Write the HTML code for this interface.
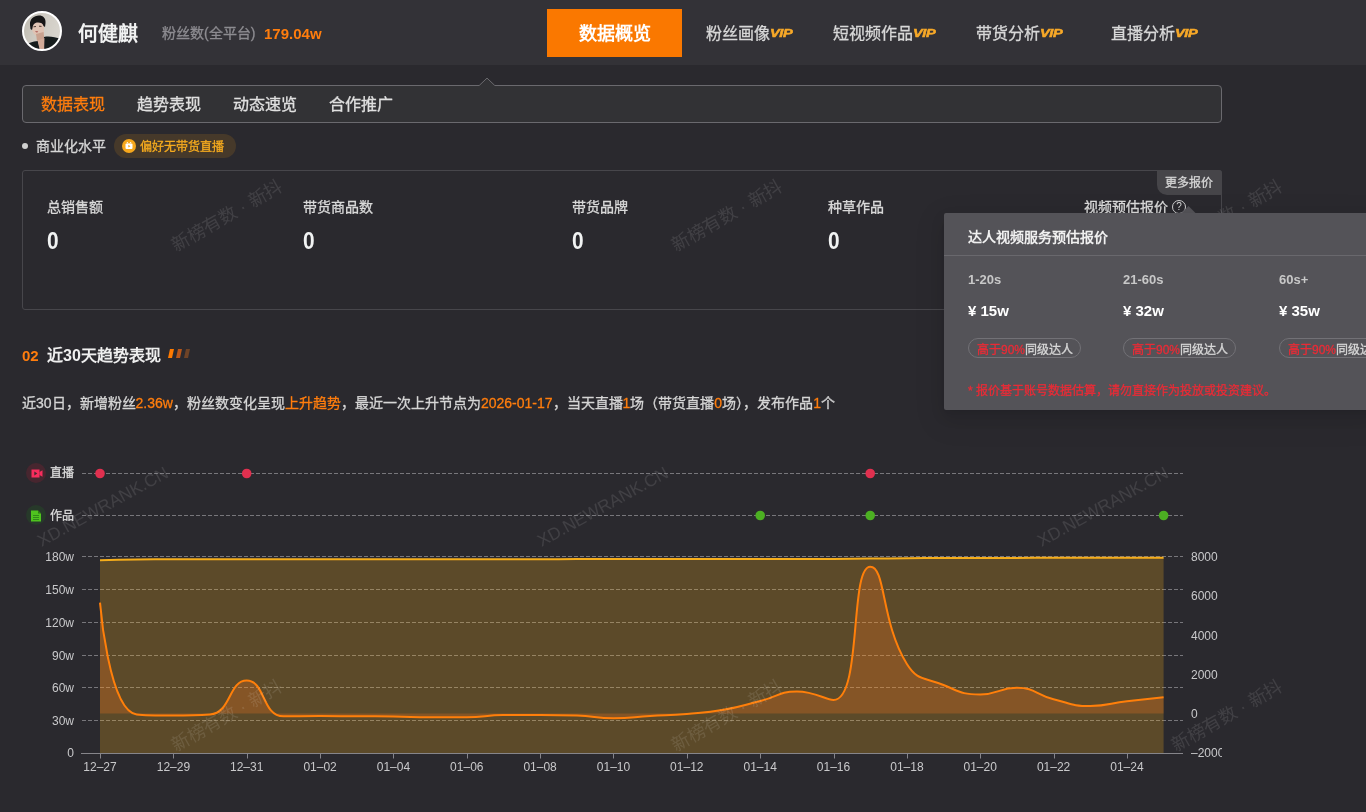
<!DOCTYPE html>
<html lang="zh-CN">
<head>
<meta charset="utf-8">
<style>
*{margin:0;padding:0;box-sizing:border-box}
body{will-change:transform}html,body{width:1366px;height:812px;overflow:hidden;background:#2a292e;font-family:"Liberation Sans",sans-serif;color:#d8d8d8}
.abs{position:absolute;white-space:nowrap}
.t{position:absolute;white-space:nowrap;line-height:1;-webkit-text-stroke:0.3px currentColor}.t[style*="bold"]{-webkit-text-stroke:0}
.ax{font-family:"Liberation Sans",sans-serif;font-size:12px;fill:#c9c9cb}
.or{color:#ff7d0d}
.red{color:#ea2b36}
.vip{position:absolute;font-size:11px;font-weight:bold;font-style:italic;color:#f8a928;letter-spacing:-0.3px;line-height:1;transform:scaleX(1.32);transform-origin:0 0;-webkit-text-stroke:0.5px currentColor}
.wm{position:absolute;width:0;height:0}.wm span{position:absolute;left:0;top:0;line-height:1;color:rgba(255,255,255,0.11);font-size:18px;transform:translate(-50%,-50%) rotate(-29.6deg);white-space:nowrap}.wm span.xd{font-size:17.2px;transform:translate(-50%,-50%) rotate(-28.8deg)}
</style>
</head>
<body>
<!-- header -->
<div class="abs" style="left:0;top:0;width:1366px;height:65px;background:#333237"></div>
<svg class="abs" style="left:22px;top:11px" width="40" height="40" viewBox="0 0 40 40">
<defs><clipPath id="av"><circle cx="20" cy="20" r="19"/></clipPath>
<linearGradient id="avbg" x1="0" y1="0" x2="1" y2="0.3"><stop offset="0" stop-color="#b9b6ab"/><stop offset="0.45" stop-color="#cdc9c0"/><stop offset="1" stop-color="#d9d6cf"/></linearGradient>
<filter id="avb" x="-10%" y="-10%" width="120%" height="120%"><feGaussianBlur stdDeviation="0.7"/></filter></defs>
<g clip-path="url(#av)"><g filter="url(#avb)">
<rect x="-2" y="-2" width="44" height="44" fill="url(#avbg)"/>
<path d="M10 16 C10 12 13 10 17 10 C20 10 22 12 22 16 L22 22 C21 25 18 26 15 25 C12 24 10.5 21 10 18 Z" fill="#dfc3b3"/>
<path d="M14 23 L21.5 21 L22.5 29 L15 30 Z" fill="#c9a28f"/>
<path d="M8 14 C7.5 8 12 4.5 17 4.5 C21 4.5 24 7 23.5 12 L23 16 L21.5 15 C21 12.5 19 11.5 16 11.5 C13 11.5 11 13 10.5 17 L10 19 L8.5 18 Z" fill="#141417"/>
<path d="M11.5 15.8 L14 15.5 M17 15.2 L19.5 15.4" stroke="#3a2a26" stroke-width="0.9"/>
<path d="M13 20.6 C14 20.2 15.5 20.3 16.2 20.8 C15.3 21.7 13.9 21.6 13 20.6 Z" fill="#a8524e"/>
<path d="M-2 42 L0 36 C5 32 11 30.5 16 30 L19 42 Z" fill="#131a1f"/>
<path d="M21 42 L22 26 C27 25 33 26 39 28 L42 42 Z" fill="#131a1f"/>
<path d="M15.5 29.5 L22.5 27 L22 42 L18.5 42 Z" fill="#d2ab98"/>
</g></g>
<circle cx="20" cy="20" r="19" fill="none" stroke="#ffffff" stroke-width="2"/>
</svg>
<div class="t" style="left:78px;top:24px;font-size:20px;font-weight:bold;color:#f1f2f2">何健麒</div>
<div class="t" style="left:162px;top:26px;font-size:14px;color:#8d8c91">粉丝数(全平台)</div>
<div class="t" style="left:264px;top:26px;font-size:15px;font-weight:bold;color:#ff7d0d">179.04w</div>

<div class="abs" style="left:547px;top:9px;width:135px;height:48px;background:#fa7800"></div>
<div class="t" style="left:579px;top:25px;font-size:18px;font-weight:bold;color:#ffffff">数据概览</div>

<div class="t" style="left:706px;top:25.5px;font-size:16px;color:#d8d8d8">粉丝画像</div><div class="vip" style="left:770px;top:28px">VIP</div>
<div class="t" style="left:833px;top:25.5px;font-size:16px;color:#d8d8d8">短视频作品</div><div class="vip" style="left:913px;top:28px">VIP</div>
<div class="t" style="left:976px;top:25.5px;font-size:16px;color:#d8d8d8">带货分析</div><div class="vip" style="left:1040px;top:28px">VIP</div>
<div class="t" style="left:1111px;top:25.5px;font-size:16px;color:#d8d8d8">直播分析</div><div class="vip" style="left:1175px;top:28px">VIP</div>

<!-- subtabs -->
<div class="abs" style="left:22px;top:85px;width:1200px;height:38px;border:1px solid #6a696e;border-radius:4px;background:#323235"></div>
<svg class="abs" style="left:470px;top:70px" width="40" height="20" viewBox="0 0 40 20">
<path d="M9.2 17 L9.2 15 L17 7.6 L24.8 15 L24.8 17 Z" fill="#323235"/>
<path d="M9.2 15.5 L17 8.1 L24.8 15.5" fill="none" stroke="#6a696e" stroke-width="1"/>
</svg>
<div class="t" style="left:41px;top:97px;font-size:16px;color:#ff7d0d">数据表现</div>
<div class="t" style="left:137px;top:97px;font-size:16px;color:#e0e0e0">趋势表现</div>
<div class="t" style="left:233px;top:97px;font-size:16px;color:#e0e0e0">动态速览</div>
<div class="t" style="left:329px;top:97px;font-size:16px;color:#e0e0e0">合作推广</div>

<!-- commercial -->
<div class="abs" style="left:22px;top:143px;width:6px;height:6px;border-radius:50%;background:#d0d0d0"></div>
<div class="t" style="left:36px;top:139px;font-size:14px;color:#d6d6d6">商业化水平</div>
<div class="abs" style="left:114px;top:134px;width:122px;height:24px;border-radius:12px;background:#46392a"></div>
<svg class="abs" style="left:122px;top:139px" width="14" height="14" viewBox="0 0 14 14">
<circle cx="7" cy="7" r="7" fill="#f6a71c"/>
<rect x="3.5" y="4.5" width="7" height="5.5" rx="1" fill="#fff"/>
<path d="M5 3 L6 4.5 M9 3 L8 4.5" stroke="#fff" stroke-width="1"/>
<path d="M6.3 5.8 L8.4 7.2 L6.3 8.6 Z" fill="#f6a71c"/>
</svg>
<div class="t" style="left:140px;top:140.5px;font-size:12px;color:#f6ab1e">偏好无带货直播</div>

<!-- card -->
<div class="abs" style="left:22px;top:170px;width:1200px;height:140px;border:1px solid #47464b;border-radius:3px"></div>
<div class="abs" style="left:1157px;top:170px;width:65px;height:25px;background:#464549;border-radius:0 3px 0 10px"></div>
<div class="t" style="left:1165px;top:177px;font-size:12px;color:#d6d6d6">更多报价</div>
<div class="t" style="left:47px;top:200px;font-size:14px;color:#dadada">总销售额</div>
<div class="t" style="left:303px;top:200px;font-size:14px;color:#dadada">带货商品数</div>
<div class="t" style="left:572px;top:200px;font-size:14px;color:#dadada">带货品牌</div>
<div class="t" style="left:828px;top:200px;font-size:14px;color:#dadada">种草作品</div>
<div class="t" style="left:1084px;top:200px;font-size:14px;color:#dadada">视频预估报价</div>
<div class="t" style="left:47px;top:229px;font-size:24px;font-weight:bold;color:#f1f3f3;transform:scaleX(0.87);transform-origin:0 0">0</div>
<div class="t" style="left:303px;top:229px;font-size:24px;font-weight:bold;color:#f1f3f3;transform:scaleX(0.87);transform-origin:0 0">0</div>
<div class="t" style="left:572px;top:229px;font-size:24px;font-weight:bold;color:#f1f3f3;transform:scaleX(0.87);transform-origin:0 0">0</div>
<div class="t" style="left:828px;top:229px;font-size:24px;font-weight:bold;color:#f1f3f3;transform:scaleX(0.87);transform-origin:0 0">0</div>

<!-- section title -->
<div class="t" style="left:22px;top:347.5px;font-size:15px;font-weight:bold;color:#ff7d0d">02</div>
<div class="t" style="left:47px;top:347.5px;font-size:16px;font-weight:bold;color:#efefef">近30天趋势表现</div>
<svg class="abs" style="left:166px;top:347px" width="26" height="13" viewBox="0 0 26 13">
<path d="M4 2 L8 2 L6 11 L2 11 Z" fill="#ff7a00"/>
<path d="M12 2 L16 2 L14 11 L10 11 Z" fill="#b8561a"/>
<path d="M20 2 L24 2 L22 11 L18 11 Z" fill="#6e4327"/>
</svg>

<div class="t" style="left:22px;top:396px;font-size:14px;color:#d6d6d6">近30日，新增粉丝<span class="or">2.36w</span>，粉丝数变化呈现<span class="or">上升趋势</span>，最近一次上升节点为<span class="or">2026-01-17</span>，当天直播<span class="or">1</span>场（带货直播<span class="or">0</span>场），发布作品<span class="or">1</span>个</div>

<!-- legend -->
<div class="abs" style="left:26px;top:463px;width:20px;height:20px;border-radius:50%;background:#47262f"></div>
<svg class="abs" style="left:29.6px;top:466.6px" width="14" height="14" viewBox="0 0 14 14">
<rect x="1.5" y="2.5" width="8" height="8" fill="#f72d5d"/>
<path d="M9.5 5 L12.5 3.2 L12.5 9.8 L9.5 8 Z" fill="#f72d5d"/>
<path d="M4.3 4.5 L7.3 6.5 L4.3 8.5 Z" fill="#47262f"/>
</svg>
<div class="t" style="left:50px;top:467px;font-size:12px;color:#dcdcdc">直播</div>
<div class="abs" style="left:26px;top:505px;width:20px;height:20px;border-radius:50%;background:#27392a"></div>
<svg class="abs" style="left:29.3px;top:509px" width="14" height="14" viewBox="0 0 14 14">
<path d="M2 1.5 L9 1.5 L12 4.5 L12 12.5 L2 12.5 Z" fill="#4fc31f"/>
<path d="M9 1.5 L9 4.5 L12 4.5" fill="#2f7a16"/>
<path d="M4 6.5 H10 M4 8.5 H10 M4 10.5 H10" stroke="#2f8a17" stroke-width="1"/>
</svg>
<div class="t" style="left:50px;top:510px;font-size:12px;color:#dcdcdc">作品</div>

<svg class="abs" style="left:0;top:0" width="1222" height="812" viewBox="0 0 1222 812">
<line x1="82" y1="473.5" x2="1183" y2="473.5" stroke="#77767b" stroke-width="1" stroke-dasharray="4 2"/>
<line x1="82" y1="515.5" x2="1183" y2="515.5" stroke="#77767b" stroke-width="1" stroke-dasharray="4 2"/>
<line x1="82" y1="556.5" x2="1183" y2="556.5" stroke="#77767b" stroke-width="1" stroke-dasharray="4 2"/>
<line x1="82" y1="589.5" x2="1183" y2="589.5" stroke="#77767b" stroke-width="1" stroke-dasharray="4 2"/>
<line x1="82" y1="622.5" x2="1183" y2="622.5" stroke="#77767b" stroke-width="1" stroke-dasharray="4 2"/>
<line x1="82" y1="655.5" x2="1183" y2="655.5" stroke="#77767b" stroke-width="1" stroke-dasharray="4 2"/>
<line x1="82" y1="687.5" x2="1183" y2="687.5" stroke="#77767b" stroke-width="1" stroke-dasharray="4 2"/>
<line x1="82" y1="720.5" x2="1183" y2="720.5" stroke="#77767b" stroke-width="1" stroke-dasharray="4 2"/>
<path d="M100.00,560.30 C100.00,560.30 118.34,559.70 136.68,559.50 C155.01,559.30 155.01,559.30 173.35,559.30 C191.69,559.30 191.69,559.30 210.03,559.30 C228.37,559.30 228.37,559.30 246.70,559.30 C265.04,559.30 265.04,559.30 283.38,559.30 C301.72,559.30 301.72,559.30 320.06,559.30 C338.39,559.30 338.39,559.30 356.73,559.30 C375.07,559.30 375.07,559.20 393.41,559.20 C411.74,559.20 411.74,559.20 430.08,559.20 C448.42,559.20 448.42,559.20 466.76,559.20 C485.10,559.20 485.10,559.20 503.43,559.20 C521.77,559.20 521.77,559.20 540.11,559.20 C558.45,559.20 558.45,559.10 576.79,559.10 C595.12,559.10 595.12,559.10 613.46,559.10 C631.80,559.10 631.80,559.10 650.14,559.10 C668.48,559.10 668.48,559.10 686.81,559.10 C705.15,559.10 705.15,559.00 723.49,559.00 C741.83,559.00 741.83,559.00 760.17,559.00 C778.50,559.00 778.50,559.00 796.84,559.00 C815.18,559.00 815.18,559.00 833.52,558.90 C851.86,558.80 851.86,558.77 870.19,558.60 C888.53,558.42 888.53,558.35 906.87,558.20 C925.21,558.05 925.21,558.08 943.54,558.00 C961.88,557.93 961.88,557.90 980.22,557.90 C998.56,557.90 998.56,557.90 1016.90,557.90 C1035.23,557.90 1035.23,557.80 1053.57,557.80 C1071.91,557.80 1071.91,557.80 1090.25,557.80 C1108.59,557.80 1108.59,557.70 1126.92,557.70 C1145.26,557.70 1163.60,557.70 1163.60,557.70 L1163.60,753.5 L100.00,753.5 Z" fill="rgba(245,176,26,0.25)"/>
<path d="M100.00,602.70 C100.00,602.70 108.72,710.97 136.68,714.50 C145.39,715.60 155.01,715.60 173.35,715.60 C191.69,715.60 194.51,715.60 210.03,714.50 C231.18,713.00 228.59,680.50 246.70,680.50 C265.27,680.50 262.00,716.30 283.38,716.30 C298.68,716.30 301.72,716.00 320.06,716.00 C338.39,716.00 338.39,716.17 356.73,716.30 C375.07,716.42 375.07,716.30 393.41,716.50 C411.75,716.70 411.74,717.30 430.08,717.30 C448.42,717.30 448.44,717.30 466.76,717.30 C485.11,717.30 485.08,715.00 503.43,715.00 C521.75,715.00 521.77,715.00 540.11,715.00 C558.45,715.00 558.47,715.00 576.79,715.50 C595.15,716.00 595.12,718.20 613.46,718.20 C631.79,718.20 631.80,717.08 650.14,716.00 C668.47,714.93 668.52,715.45 686.81,713.90 C705.19,712.35 705.35,712.99 723.49,709.80 C742.03,706.54 741.87,705.56 760.17,701.00 C778.54,696.41 778.45,691.50 796.84,691.50 C815.12,691.50 825.66,700.00 833.52,700.00 C862.34,700.00 849.26,566.80 870.19,566.80 C885.93,566.80 880.80,621.99 906.87,664.00 C917.47,681.09 924.20,676.98 943.54,685.00 C960.88,692.18 961.74,694.40 980.22,694.40 C998.41,694.40 998.84,687.80 1016.90,687.80 C1035.52,687.80 1034.96,694.68 1053.57,699.30 C1071.63,703.78 1071.84,706.00 1090.25,706.00 C1108.51,706.00 1108.56,703.40 1126.92,701.20 C1145.24,699.00 1163.60,697.20 1163.60,697.20 L1163.60,713.6 L100.00,713.6 Z" fill="rgba(255,120,30,0.25)"/>
<path d="M100.00,560.30 C100.00,560.30 118.34,559.70 136.68,559.50 C155.01,559.30 155.01,559.30 173.35,559.30 C191.69,559.30 191.69,559.30 210.03,559.30 C228.37,559.30 228.37,559.30 246.70,559.30 C265.04,559.30 265.04,559.30 283.38,559.30 C301.72,559.30 301.72,559.30 320.06,559.30 C338.39,559.30 338.39,559.30 356.73,559.30 C375.07,559.30 375.07,559.20 393.41,559.20 C411.74,559.20 411.74,559.20 430.08,559.20 C448.42,559.20 448.42,559.20 466.76,559.20 C485.10,559.20 485.10,559.20 503.43,559.20 C521.77,559.20 521.77,559.20 540.11,559.20 C558.45,559.20 558.45,559.10 576.79,559.10 C595.12,559.10 595.12,559.10 613.46,559.10 C631.80,559.10 631.80,559.10 650.14,559.10 C668.48,559.10 668.48,559.10 686.81,559.10 C705.15,559.10 705.15,559.00 723.49,559.00 C741.83,559.00 741.83,559.00 760.17,559.00 C778.50,559.00 778.50,559.00 796.84,559.00 C815.18,559.00 815.18,559.00 833.52,558.90 C851.86,558.80 851.86,558.77 870.19,558.60 C888.53,558.42 888.53,558.35 906.87,558.20 C925.21,558.05 925.21,558.08 943.54,558.00 C961.88,557.93 961.88,557.90 980.22,557.90 C998.56,557.90 998.56,557.90 1016.90,557.90 C1035.23,557.90 1035.23,557.80 1053.57,557.80 C1071.91,557.80 1071.91,557.80 1090.25,557.80 C1108.59,557.80 1108.59,557.70 1126.92,557.70 C1145.26,557.70 1163.60,557.70 1163.60,557.70" fill="none" stroke="#f5ad1b" stroke-width="2"/>
<path d="M100.00,602.70 C100.00,602.70 108.72,710.97 136.68,714.50 C145.39,715.60 155.01,715.60 173.35,715.60 C191.69,715.60 194.51,715.60 210.03,714.50 C231.18,713.00 228.59,680.50 246.70,680.50 C265.27,680.50 262.00,716.30 283.38,716.30 C298.68,716.30 301.72,716.00 320.06,716.00 C338.39,716.00 338.39,716.17 356.73,716.30 C375.07,716.42 375.07,716.30 393.41,716.50 C411.75,716.70 411.74,717.30 430.08,717.30 C448.42,717.30 448.44,717.30 466.76,717.30 C485.11,717.30 485.08,715.00 503.43,715.00 C521.75,715.00 521.77,715.00 540.11,715.00 C558.45,715.00 558.47,715.00 576.79,715.50 C595.15,716.00 595.12,718.20 613.46,718.20 C631.79,718.20 631.80,717.08 650.14,716.00 C668.47,714.93 668.52,715.45 686.81,713.90 C705.19,712.35 705.35,712.99 723.49,709.80 C742.03,706.54 741.87,705.56 760.17,701.00 C778.54,696.41 778.45,691.50 796.84,691.50 C815.12,691.50 825.66,700.00 833.52,700.00 C862.34,700.00 849.26,566.80 870.19,566.80 C885.93,566.80 880.80,621.99 906.87,664.00 C917.47,681.09 924.20,676.98 943.54,685.00 C960.88,692.18 961.74,694.40 980.22,694.40 C998.41,694.40 998.84,687.80 1016.90,687.80 C1035.52,687.80 1034.96,694.68 1053.57,699.30 C1071.63,703.78 1071.84,706.00 1090.25,706.00 C1108.51,706.00 1108.56,703.40 1126.92,701.20 C1145.24,699.00 1163.60,697.20 1163.60,697.20" fill="none" stroke="#ff7f0a" stroke-width="2"/>
<line x1="81" y1="753.5" x2="1183" y2="753.5" stroke="#86858a" stroke-width="1"/>
<line x1="100.5" y1="753.5" x2="100.5" y2="758.5" stroke="#86858a" stroke-width="1"/>
<line x1="173.5" y1="753.5" x2="173.5" y2="758.5" stroke="#86858a" stroke-width="1"/>
<line x1="247.5" y1="753.5" x2="247.5" y2="758.5" stroke="#86858a" stroke-width="1"/>
<line x1="320.5" y1="753.5" x2="320.5" y2="758.5" stroke="#86858a" stroke-width="1"/>
<line x1="393.5" y1="753.5" x2="393.5" y2="758.5" stroke="#86858a" stroke-width="1"/>
<line x1="467.5" y1="753.5" x2="467.5" y2="758.5" stroke="#86858a" stroke-width="1"/>
<line x1="540.5" y1="753.5" x2="540.5" y2="758.5" stroke="#86858a" stroke-width="1"/>
<line x1="613.5" y1="753.5" x2="613.5" y2="758.5" stroke="#86858a" stroke-width="1"/>
<line x1="687.5" y1="753.5" x2="687.5" y2="758.5" stroke="#86858a" stroke-width="1"/>
<line x1="760.5" y1="753.5" x2="760.5" y2="758.5" stroke="#86858a" stroke-width="1"/>
<line x1="834.5" y1="753.5" x2="834.5" y2="758.5" stroke="#86858a" stroke-width="1"/>
<line x1="907.5" y1="753.5" x2="907.5" y2="758.5" stroke="#86858a" stroke-width="1"/>
<line x1="980.5" y1="753.5" x2="980.5" y2="758.5" stroke="#86858a" stroke-width="1"/>
<line x1="1054.5" y1="753.5" x2="1054.5" y2="758.5" stroke="#86858a" stroke-width="1"/>
<line x1="1127.5" y1="753.5" x2="1127.5" y2="758.5" stroke="#86858a" stroke-width="1"/>
<text x="74" y="560.8" text-anchor="end" class="ax">180w</text>
<text x="74" y="593.8" text-anchor="end" class="ax">150w</text>
<text x="74" y="626.8" text-anchor="end" class="ax">120w</text>
<text x="74" y="659.8" text-anchor="end" class="ax">90w</text>
<text x="74" y="691.8" text-anchor="end" class="ax">60w</text>
<text x="74" y="724.8" text-anchor="end" class="ax">30w</text>
<text x="74" y="756.8" text-anchor="end" class="ax">0</text>
<text x="1191" y="560.8" class="ax">8000</text>
<text x="1191" y="600.1999999999999" class="ax">6000</text>
<text x="1191" y="639.5999999999999" class="ax">4000</text>
<text x="1191" y="679.0" class="ax">2000</text>
<text x="1191" y="718.4" class="ax">0</text>
<text x="1191" y="756.8" class="ax">&#8211;2000</text>
<text x="100.0" y="771" text-anchor="middle" class="ax">12&#8211;27</text>
<text x="173.4" y="771" text-anchor="middle" class="ax">12&#8211;29</text>
<text x="246.7" y="771" text-anchor="middle" class="ax">12&#8211;31</text>
<text x="320.1" y="771" text-anchor="middle" class="ax">01&#8211;02</text>
<text x="393.4" y="771" text-anchor="middle" class="ax">01&#8211;04</text>
<text x="466.8" y="771" text-anchor="middle" class="ax">01&#8211;06</text>
<text x="540.1" y="771" text-anchor="middle" class="ax">01&#8211;08</text>
<text x="613.5" y="771" text-anchor="middle" class="ax">01&#8211;10</text>
<text x="686.8" y="771" text-anchor="middle" class="ax">01&#8211;12</text>
<text x="760.2" y="771" text-anchor="middle" class="ax">01&#8211;14</text>
<text x="833.5" y="771" text-anchor="middle" class="ax">01&#8211;16</text>
<text x="906.9" y="771" text-anchor="middle" class="ax">01&#8211;18</text>
<text x="980.2" y="771" text-anchor="middle" class="ax">01&#8211;20</text>
<text x="1053.6" y="771" text-anchor="middle" class="ax">01&#8211;22</text>
<text x="1126.9" y="771" text-anchor="middle" class="ax">01&#8211;24</text>
<circle cx="100.0" cy="473.5" r="4.8" fill="#e0304f"/>
<circle cx="246.7" cy="473.5" r="4.8" fill="#e0304f"/>
<circle cx="870.2" cy="473.5" r="4.8" fill="#e0304f"/>
<circle cx="760.2" cy="515.5" r="4.8" fill="#4caf22"/>
<circle cx="870.2" cy="515.5" r="4.8" fill="#4caf22"/>
<circle cx="1163.6" cy="515.5" r="4.8" fill="#4caf22"/>
</svg>

<!-- watermarks -->
<div class="wm" style="left:227px;top:216px"><span>新榜有数 · 新抖</span></div>
<div class="wm" style="left:727px;top:216px"><span>新榜有数 · 新抖</span></div>
<div class="wm" style="left:1227px;top:216px"><span>新榜有数 · 新抖</span></div>
<div class="wm" style="left:227px;top:716px"><span>新榜有数 · 新抖</span></div>
<div class="wm" style="left:727px;top:716px"><span>新榜有数 · 新抖</span></div>
<div class="wm" style="left:1227px;top:716px"><span>新榜有数 · 新抖</span></div>
<div class="wm" style="left:103px;top:507px"><span class="xd">XD.NEWRANK.CN</span></div>
<div class="wm" style="left:603px;top:507px"><span class="xd">XD.NEWRANK.CN</span></div>
<div class="wm" style="left:1103px;top:507px"><span class="xd">XD.NEWRANK.CN</span></div>

<div class="abs" style="left:1172px;top:200px;width:14px;height:14px;border:1px solid #cfcfcf;border-radius:50%;font-size:10px;line-height:12px;text-align:center;color:#d8d8d8">?</div>
<!-- popup -->
<svg class="abs" style="left:1180px;top:204px" width="20" height="12" viewBox="0 0 20 12">
<path d="M1 9.5 L8.5 2 L16 9.5 Z" fill="#545358"/>
</svg>
<div class="abs" style="left:944px;top:213px;width:430px;height:197px;background:#545358;border-radius:2px;box-shadow:0 3px 6px -4px rgba(0,0,0,.12),0 6px 16px 0 rgba(0,0,0,.08),0 9px 28px 8px rgba(0,0,0,.05)"></div>
<div class="t" style="left:968px;top:230px;font-size:14px;font-weight:bold;color:#f0f0f0">达人视频服务预估报价</div>
<div class="abs" style="left:944px;top:255px;width:430px;height:1px;background:#69686d"></div>
<div class="t" style="left:968px;top:273px;font-size:13px;font-weight:bold;color:#c8c8c8">1-20s</div>
<div class="t" style="left:1123px;top:273px;font-size:13px;font-weight:bold;color:#c8c8c8">21-60s</div>
<div class="t" style="left:1279px;top:273px;font-size:13px;font-weight:bold;color:#c8c8c8">60s+</div>
<div class="t" style="left:968px;top:303px;font-size:15px;font-weight:bold;color:#ffffff">¥ 15w</div>
<div class="t" style="left:1123px;top:303px;font-size:15px;font-weight:bold;color:#ffffff">¥ 32w</div>
<div class="t" style="left:1279px;top:303px;font-size:15px;font-weight:bold;color:#ffffff">¥ 35w</div>
<div class="abs" style="left:968px;top:338px;width:113px;height:20px;border:1px solid #727176;border-radius:10px"></div>
<div class="abs" style="left:1123px;top:338px;width:113px;height:20px;border:1px solid #727176;border-radius:10px"></div>
<div class="abs" style="left:1279px;top:338px;width:113px;height:20px;border:1px solid #727176;border-radius:10px"></div>
<div class="t" style="left:977px;top:343.5px;font-size:12px;color:#d8d8d8"><span class="red">高于90%</span>同级达人</div>
<div class="t" style="left:1132px;top:343.5px;font-size:12px;color:#d8d8d8"><span class="red">高于90%</span>同级达人</div>
<div class="t" style="left:1288px;top:343.5px;font-size:12px;color:#d8d8d8"><span class="red">高于90%</span>同级达人</div>
<div class="t" style="left:968px;top:385px;font-size:12px;color:#ea2b36">* 报价基于账号数据估算，请勿直接作为投放或投资建议。</div>
</body>
</html>
